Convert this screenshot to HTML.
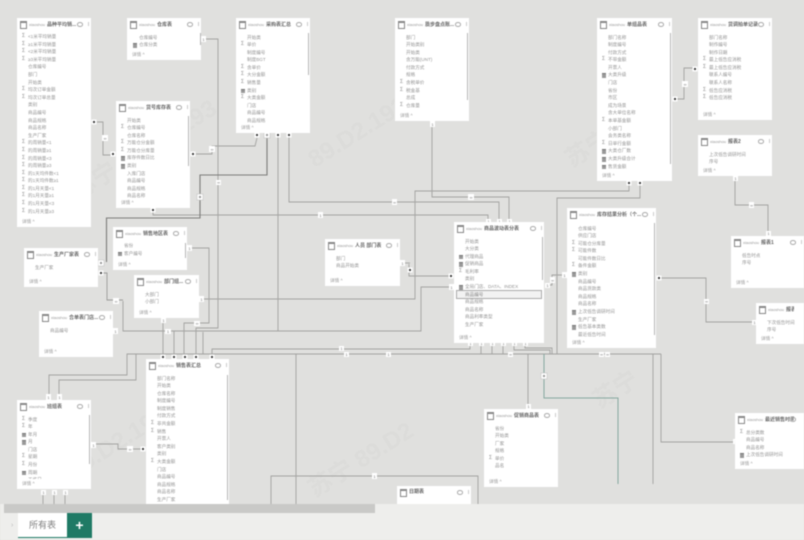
<!DOCTYPE html>
<html lang="zh"><head><meta charset="utf-8"><title>模型视图</title>
<style>
html,body{margin:0;padding:0;width:804px;height:540px;overflow:hidden;background:#e0e0de}
#w{position:relative;width:804px;height:540px;overflow:hidden;background:#e0e0de;filter:blur(.55px);font-family:"Liberation Sans","Noto Sans CJK SC",sans-serif}
svg.l{position:absolute;left:0;top:0}
.k{position:absolute;background:#fff;overflow:hidden}
.h{position:absolute;left:3px;top:2px;height:9px;right:10px;white-space:nowrap;overflow:hidden;font-size:5px;line-height:9px;font-weight:700;color:#666;padding-left:9px}
.h small{font-size:4px;font-weight:400;color:#999;margin-right:2px}
.h:before{content:"";position:absolute;left:0;top:1px;width:5px;height:5px;border:1px solid #888;border-top-width:2px}
.e{position:absolute;right:8px;top:4px;width:4px;height:2.5px;border:1px solid #aaa;border-radius:50%}
.d{position:absolute;right:2px;top:4px;width:1px;height:4px;background:#ccc}
.b{position:absolute;left:0;right:3px;top:15.5px}
.b p{margin:0;height:7.6px;line-height:7.6px;font-size:4.6px;color:#959595;padding-left:11px;white-space:nowrap;position:relative}
.b p.s:before{content:"Σ";position:absolute;left:5px;top:0;font-size:5px;color:#888}
.b p.c:before{content:"";position:absolute;left:5px;top:2px;width:4px;height:3.5px;background:#999;border-top:1px solid #777}
.b p.x{background:#f2f2f2;outline:1px solid #aaa;margin:0 0 0 3px;padding-left:8px;color:#888}
.f{position:absolute;left:0;right:0;bottom:0;height:10px;background:#fff;font-size:4.6px;line-height:10px;color:#999;padding-left:5px}
.v{position:absolute;width:1.5px;background:#b5b5b5}
#m{position:absolute;left:0;top:504px;width:804px;height:36px;background:#eeeeec}
#sb{position:absolute;left:4px;top:0;width:371px;height:9px;background:#c9c9c7}
#tab{position:absolute;left:18px;top:9px;width:49px;height:25px;background:#fff;border-bottom:1px solid #1f7a65;text-align:center;font-size:9px;line-height:25px;color:#808080;box-sizing:border-box}
#pl{position:absolute;left:67px;top:9px;width:25px;height:25px;background:#1f7a65;color:#fff;font-size:14px;font-weight:700;line-height:24px;text-align:center}
#ar{position:absolute;left:11px;top:18px;font-size:7px;color:#bbb}
.wm{position:absolute;font-size:24px;font-weight:700;color:#dcdcda;transform:rotate(-32deg);white-space:nowrap}
</style></head><body><div id="w">
<div class="wm" style="left:60px;top:130px">苏宁 89.D2.193</div>
<div class="wm" style="left:300px;top:110px">89.D2.193.50</div>
<div class="wm" style="left:560px;top:120px">苏宁 50</div>
<div class="wm" style="left:60px;top:420px">89.D2.193.50</div>
<div class="wm" style="left:300px;top:440px">苏宁 89.D2</div>
<div class="wm" style="left:590px;top:370px">苏宁</div>

<svg class="l" width="804" height="540" viewBox="0 0 804 540" fill="none">
<defs>
<g id="n"><rect x="-2.5" y="-2.5" width="5" height="5" fill="#fff"/><circle r="1.1" fill="#333"/></g>
<g id="o"><rect x="-3" y="-3" width="6" height="6" fill="#fff" stroke="#bbb" stroke-width=".5"/><rect x="-1" y="-1" width="2" height="2" fill="#999"/></g>
</defs>
<g stroke="#a2a2a0" stroke-width=".9">
<path d="M201 39H218V328H196V356"/>
<path d="M187 248H209V323H184V356"/>
<path d="M97 122H103V155H113"/>
<path d="M196 154H212V146H255L257 138"/>
<path d="M123 301V331H421V287H451"/>
<path d="M278 136V331"/>
<path d="M174 331V356"/>
<path d="M289 136V202H499V222"/>
<path d="M153 211V215H488V222"/>
<path d="M432 124V197H509V222"/>
<path d="M199 299H415V191H629V184"/>
<path d="M640 184V198H557V354"/>
<path d="M409 264V276H451"/>
<path d="M400 263H410"/>
<path d="M470 344V349H212V356"/>
<path d="M163 320V356"/>
<path d="M481 344V354H127V375H49V397"/>
<path d="M136 354V380H59V397"/>
<path d="M203 332V354"/>
<path d="M296 354V504"/>
<path d="M91 444H118V449H143"/>
<path d="M43 492V504M54 492V504M65 492V504"/>
<path d="M271 504V476H478V504"/>
<path d="M528 354V406"/>
<path d="M653 354V484"/>
<path d="M661 354V442H733"/>
<path d="M659 278H706V322H754"/>
<path d="M735 179V205H768V233"/>
<path d="M675 99H684V68H695"/>
<path d="M547 285H552V275H564"/>
<path d="M492 344V354M503 344V354M514 344V350H550V354M525 344V348H552V354"/>
<path d="M354 354H661"/>
</g>
<path d="M267 136V175H200V218H106.500V262" stroke="#7c7c7a" stroke-width="1.100"/>
<path d="M101 273H107V300H123" stroke="#9a9a98" stroke-width=".9"/>
<path d="M544 354V398H618V484" stroke="#86a89f" stroke-width="1"/>
<g>
<use href="#n" x="257" y="135"/><use href="#o" x="267" y="135"/><use href="#n" x="278" y="135"/><use href="#n" x="289" y="135"/>
<use href="#n" x="94" y="122"/><use href="#n" x="113" y="154"/><use href="#n" x="193" y="154"/>
<use href="#n" x="153" y="210"/><use href="#o" x="101" y="263"/><use href="#n" x="101" y="273"/>
<use href="#n" x="163" y="357"/><use href="#n" x="174" y="357"/><use href="#n" x="185" y="357"/><use href="#n" x="196" y="357"/><use href="#n" x="212" y="357"/>
<use href="#n" x="143" y="449"/><use href="#n" x="451" y="276"/><use href="#n" x="629" y="183"/><use href="#n" x="640" y="183"/>
<use href="#n" x="675" y="99"/><use href="#n" x="695" y="69"/><use href="#n" x="659" y="278"/><use href="#n" x="410" y="270"/>
<use href="#o" x="200" y="197"/><use href="#o" x="544" y="376"/>
</g>
<g fill="#fff">
<rect x="201" y="36" width="5" height="6"/><rect x="216" y="180" width="5" height="5"/><rect x="187" y="245" width="5" height="6"/><rect x="199" y="296" width="5" height="6"/>
<rect x="113" y="328" width="5" height="6"/><rect x="113" y="298" width="6" height="6"/><rect x="161" y="317" width="5" height="6"/><rect x="194" y="321" width="6" height="5"/><rect x="165" y="329" width="6" height="5"/>
<rect x="46" y="394" width="5" height="6"/><rect x="57" y="394" width="5" height="6"/><rect x="91" y="442" width="5" height="6"/><rect x="127" y="446" width="6" height="6"/>
<rect x="41" y="490" width="5" height="5"/><rect x="52" y="490" width="5" height="5"/><rect x="63" y="490" width="5" height="5"/>
<rect x="430" y="121" width="5" height="6"/><rect x="392" y="199" width="5" height="6"/><rect x="318" y="212" width="5" height="6"/><rect x="468" y="194" width="6" height="6"/>
<rect x="339" y="346" width="5" height="5"/><rect x="344" y="352" width="5" height="5"/><rect x="386" y="352" width="5" height="5"/><rect x="372" y="473" width="5" height="6"/>
<rect x="486" y="219" width="5" height="5"/><rect x="497" y="219" width="5" height="5"/><rect x="507" y="219" width="5" height="5"/><rect x="449" y="284" width="5" height="6"/>
<rect x="468" y="341" width="5" height="5"/><rect x="479" y="341" width="5" height="5"/><rect x="490" y="341" width="5" height="5"/><rect x="501" y="341" width="5" height="5"/><rect x="512" y="341" width="5" height="5"/><rect x="523" y="341" width="5" height="5"/>
<rect x="508" y="352" width="5" height="5"/><rect x="599" y="352" width="5" height="5"/><rect x="605" y="352" width="5" height="5"/>
<rect x="526" y="404" width="5" height="5"/><rect x="733" y="439" width="5" height="5"/><rect x="752" y="320" width="5" height="5"/><rect x="704" y="299" width="5" height="5"/>
<rect x="733" y="176" width="5" height="5"/><rect x="749" y="202" width="5" height="6"/><rect x="766" y="231" width="5" height="5"/><rect x="682" y="81" width="6" height="6"/>
<rect x="562" y="272" width="5" height="6"/><rect x="550" y="277" width="5" height="6"/><rect x="545" y="283" width="5" height="5"/><rect x="102" y="135" width="6" height="6"/>
<rect x="209" y="146" width="6" height="6"/><rect x="400" y="260" width="5" height="6"/>
</g>
<g fill="#777" font-size="4" text-anchor="middle" font-family="Liberation Sans">
<text x="203.500" y="41">1</text><text x="218.500" y="184">∞</text><text x="189.500" y="250">1</text><text x="201.500" y="301">1</text><text x="115.500" y="333">1</text>
<text x="116" y="303">∞</text><text x="163.500" y="322">1</text><text x="197" y="325">∞</text><text x="168" y="333">1</text><text x="48.500" y="399">1</text><text x="59.500" y="399">1</text>
<text x="93.500" y="447">1</text><text x="130" y="451">∞</text><text x="43.500" y="494">1</text><text x="54.500" y="494">1</text><text x="65.500" y="494">1</text>
<text x="432.500" y="126">1</text><text x="394.500" y="204">∞</text><text x="320.500" y="217">1</text><text x="471" y="199">∞</text>
<text x="341.500" y="350">1</text><text x="346.500" y="356">1</text><text x="388.500" y="356">1</text><text x="374.500" y="478">1</text>
<text x="488.500" y="223">1</text><text x="499.500" y="223">1</text><text x="509.500" y="223">1</text><text x="451.500" y="289">1</text>
<text x="470.500" y="345">1</text><text x="481.500" y="345">1</text><text x="492.500" y="345">1</text><text x="503.500" y="345">1</text><text x="514.500" y="345">1</text><text x="525.500" y="345">1</text>
<text x="510.500" y="356">∞</text><text x="601.500" y="356">∞</text><text x="607.500" y="356">∞</text><text x="528.500" y="408">1</text><text x="735.500" y="443">1</text>
<text x="754.500" y="324">1</text><text x="706.500" y="303">∞</text><text x="735.500" y="180">1</text><text x="751.500" y="207">∞</text><text x="768.500" y="235">1</text>
<text x="685" y="86">∞</text><text x="564.500" y="277">1</text><text x="552.500" y="282">∞</text><text x="547.500" y="287">1</text><text x="105" y="140">∞</text><text x="212" y="151">∞</text><text x="402.500" y="265">1</text>
</g>
</svg>

<div class="k" style="left:17px;top:18px;width:74px;height:209px"><div class="h"><small>xiaoshou</small>品种平均销...</div><i class="e"></i><i class="d"></i><div class="b" style="top:15px"><p class="s">&lt;1米平均销量</p><p class="s">≥1米平均销量</p><p class="s">&lt;2米平均销量</p><p class="s">≥3米平均销量</p><p>仓库编号</p><p>部门</p><p>开始类</p><p class="s">均次订单金额</p><p class="s">均次订单总量</p><p>类别</p><p>商品编号</p><p>商品规格</p><p>商品名称</p><p>生产厂家</p><p class="s">的周销量&lt;1</p><p class="s">的周销量≥1</p><p class="s">的周销量&lt;3</p><p class="s">的周销量≥3</p><p class="s">的1天均件数&lt;1</p><p class="s">的1天均件数≥1</p><p class="s">的1月天量&lt;1</p><p class="s">的1月天量≥1</p><p class="s">的1月天量&lt;3</p><p class="s">的1月天量≥3</p></div><div class="f">详情 ^</div></div>

<div class="k" style="left:127px;top:18px;width:74px;height:42px"><div class="h"><small>xiaoshou</small>仓库表</div><i class="e"></i><i class="d"></i><div class="b" style="left:1px"><p>仓库编号</p><p class="c">仓库分类</p></div><div class="f">详情 ^</div><i class="v" style="right:0;top:15px;height:12px"></i></div>

<div class="k" style="left:236px;top:18px;width:74px;height:115px"><div class="h"><small>xiaoshou</small>采购表汇总</div><i class="e"></i><i class="d"></i><div class="b"><p>开始类</p><p class="s">单价</p><p>制度编号</p><p>制度BGT</p><p class="s">含单价</p><p class="s">大分金额</p><p class="s">销售量</p><p class="c">类别</p><p class="s">大类金额</p><p>门店</p><p>商品编号</p><p>商品规格</p></div><div class="f">详情 ^</div><i class="v" style="right:1px;top:15px;height:42px"></i></div>

<div class="k" style="left:116px;top:101px;width:74px;height:107px"><div class="h"><small>xiaoshou</small>货号库存表</div><i class="e"></i><i class="d"></i><div class="b"><p>开始类</p><p class="s">仓库编号</p><p>仓库名称</p><p class="s">万能仓分金额</p><p class="s">万能仓分库量</p><p class="c">库存件数日比</p><p class="c">类别</p><p>入库门店</p><p>商品编号</p><p>商品规格</p><p>商品名称</p></div><div class="f">详情 ^</div><i class="v" style="right:1px;top:15px;height:50px"></i></div>

<div class="k" style="left:113px;top:227px;width:74px;height:43px"><div class="h"><small>xiaoshou</small>销售地区表</div><i class="e"></i><i class="d"></i><div class="b" style="top:15px"><p>省份</p><p class="c">客户编号</p></div><div class="f">详情 ^</div><i class="v" style="right:1px;top:16px;height:15px"></i></div>

<div class="k" style="left:24px;top:248px;width:74px;height:39px"><div class="h"><small>xiaoshou</small>生产厂家表</div><i class="e"></i><i class="d"></i><div class="b"><p>生产厂家</p></div><div class="f">详情 ^</div></div>

<div class="k" style="left:134px;top:275px;width:65px;height:43px"><div class="h"><small>xiaoshou</small>部门组...</div><i class="e"></i><i class="d"></i><div class="b"><p>大部门</p><p>小部门</p></div><div class="f">详情 ^</div></div>

<div class="k" style="left:39px;top:311px;width:74px;height:46px"><div class="h"><small>xiaoshou</small>合单表门店...</div><i class="e"></i><i class="d"></i><div class="b"><p>商品编号</p></div><div class="f">详情 ^</div></div>

<div class="k" style="left:146px;top:359px;width:83px;height:146px"><div class="h"><small>xiaoshou</small>销售表汇总</div><i class="e"></i><i class="d"></i><div class="b" style="top:15.5px"><p>部门名称</p><p>开始类</p><p>仓库名称</p><p>制度编号</p><p>制度销售</p><p>付款方式</p><p class="s">非共金额</p><p class="s">销售</p><p>开票人</p><p>客户类别</p><p>类别</p><p class="s">大类金额</p><p>门店</p><p>商品编号</p><p>商品规格</p><p>商品名称</p><p>生产厂家</p></div><i class="v" style="right:1px;top:16px;height:125px"></i></div>

<div class="k" style="left:17px;top:400px;width:74px;height:89px"><div class="h"><small>xiaoshou</small>班组表</div><i class="e"></i><i class="d"></i><div class="b"><p class="s">季度</p><p class="s">年</p><p class="c">年月</p><p class="c">月</p><p>门店</p><p class="s">星期</p><p class="s">月份</p><p class="c">周期</p><p>工作日</p></div><div class="f">详情 ^</div><i class="v" style="right:1px;top:15px;height:49px"></i></div>

<div class="k" style="left:325px;top:239px;width:75px;height:47px"><div class="h"><small>xiaoshou</small>人员 部门表</div><i class="e"></i><i class="d"></i><div class="b"><p>部门</p><p>商品开始类</p></div><div class="f">详情 ^</div></div>

<div class="k" style="left:395px;top:18px;width:74px;height:103px"><div class="h"><small>xiaoshou</small>质步盘点账...</div><i class="e"></i><i class="d"></i><div class="b"><p>部门</p><p>开始类别</p><p>开始类</p><p>含万能(UNT)</p><p>付款方式</p><p>规格</p><p class="s">含税单价</p><p class="s">税金基</p><p>总成</p><p class="s">仓库量</p></div><div class="f">详情 ^</div><i class="v" style="right:1px;top:15px;height:67px"></i></div>

<div class="k" style="left:597px;top:18px;width:75px;height:163px"><div class="h"><small>xiaoshou</small>单组品表</div><i class="e"></i><i class="d"></i><div class="b"><p>部门名称</p><p>制度编号</p><p>付款方式</p><p class="s">不带金额</p><p>开票人</p><p class="c">大类升级</p><p>门店</p><p>省份</p><p>市区</p><p>成为场景</p><p>含大单位名称</p><p class="s">本单基金额</p><p>小部门</p><p>会务类名称</p><p class="s">日单行金额</p><p class="c">大类仓厂数</p><p class="c">大类升级合计</p><p class="c">售货金额</p></div><div class="f">详情 ^</div><i class="v" style="right:1px;top:15px;height:131px"></i></div>

<div class="k" style="left:698px;top:18px;width:74px;height:102px"><div class="h"><small>xiaoshou</small>货调拍单记录</div><i class="e"></i><i class="d"></i><div class="b"><p>部门名称</p><p>制作编号</p><p>制作日期</p><p class="s">最上低告应消税</p><p class="s">最上低告应消税</p><p>联系人编号</p><p>联系人名称</p><p class="s">低告应消税</p><p class="s">低告应消税</p></div><div class="f">详情 ^</div></div>

<div class="k" style="left:698px;top:135px;width:74px;height:41px"><div class="h"><small>xiaoshou</small>报表2</div><i class="e"></i><i class="d"></i><div class="b"><p>上次低告调研时间</p><p>序号</p></div><div class="f">详情 ^</div></div>

<div class="k" style="left:731px;top:236px;width:73px;height:52px"><div class="h"><small>xiaoshou</small>报表1</div><i class="e"></i><i class="d"></i><div class="b"><p>低告时点</p><p>序号</p></div><div class="f">详情 ^</div></div>

<div class="k" style="left:756px;top:303px;width:48px;height:41px"><div class="h"><small>xiaoshou</small>报表3</div><div class="b"><p>下次低告时间</p><p>序号</p></div><div class="f">详情 ^</div></div>

<div class="k" style="left:454px;top:222px;width:90px;height:121px"><div class="h"><small>xiaoshou</small>商品波动表分表</div><i class="e"></i><i class="d"></i><div class="b"><p>开始类</p><p>大分类</p><p class="c">代理商品</p><p class="c">促销商品</p><p class="s">毛利率</p><p>类别</p><p class="c">全局门店、DATA、INDEX</p><p class="x">商品编号</p><p>商品规格</p><p>商品名称</p><p>商品利率类型</p><p>生产厂家</p></div><div class="f">详情 ^</div><i class="v" style="right:1px;top:15px;height:43px"></i></div>

<div class="k" style="left:567px;top:208px;width:89px;height:140px"><div class="h"><small>xiaoshou</small>库存结果分析（个...</div><i class="e"></i><i class="d"></i><div class="b" style="top:16.500px"><p>仓库编号</p><p>供应门店</p><p class="s">可能仓分库量</p><p class="s">可能件数</p><p>可能件数日比</p><p class="s">备件金额</p><p class="c">类别</p><p>商品编号</p><p>商品货款类</p><p>商品规格</p><p>商品名称</p><p class="c">上次低告调研时间</p><p>生产厂家</p><p class="c">低告基本类数</p><p>最近低告时间</p></div><div class="f">详情 ^</div><i class="v" style="right:1px;top:15px;height:112px"></i></div>

<div class="k" style="left:484px;top:409px;width:74px;height:78px"><div class="h"><small>xiaoshou</small>促销商品表</div><i class="e"></i><i class="d"></i><div class="b"><p>省份</p><p>开始类</p><p>厂家</p><p>规格</p><p class="s">单价</p><p>品名</p></div><div class="f">详情 ^</div></div>

<div class="k" style="left:735px;top:413px;width:69px;height:56px"><div class="h"><small>xiaoshou</small>最近销售时间</div><i class="e"></i><div class="b"><p class="s">总分类数</p><p>商品编号</p><p>商品名称</p><p class="c">上次低告调研时间</p></div><div class="f">详情 ^</div></div>

<div class="k" style="left:397px;top:486px;width:74px;height:19px"><div class="h">日期表</div><i class="e"></i><i class="d"></i></div>

<div id="m"><div id="sb"></div><span id="ar">›</span><div id="tab">所有表</div><div id="pl">+</div></div>
</div></body></html>
